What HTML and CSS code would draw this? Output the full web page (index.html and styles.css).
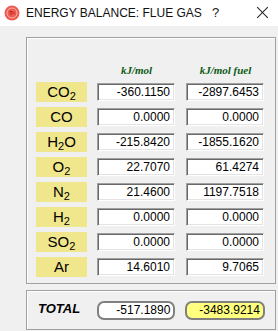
FILE: index.html
```html
<!doctype html>
<html lang="en">
  <head>
    <meta charset="UTF-8" />
    <title>Energy Balance: Flue Gas</title>
    <link rel="stylesheet" href="styles.css">
  </head>
  <body>
    <div class="titlebar">
      <svg class="app-icon" width="16" height="16" viewBox="0 0 16 16">
        <circle cx="8" cy="8" r="7.5" fill="#ef5a4f" />
        <circle cx="8" cy="8" r="5" fill="none" stroke="#f9b3ac" stroke-width="1" />
        <path d="M5.5 6.5h3M7 6.5v3.5M8.5 8h2.5" stroke="#b3261e" stroke-width="1" fill="none" />
      </svg>
      <span class="title">ENERGY BALANCE: FLUE GAS</span>
      <span class="help">?<i class="cross"></i></span>
    </div>

    <div class="panel gases">
      <div></div>
      <div class="unit">kJ/mol</div>
      <div class="unit">kJ/mol fuel</div>

      <div class="gas">CO<sub>2</sub></div>
      <div class="field">-360.1150</div>
      <div class="field">-2897.6453</div>

      <div class="gas">CO</div>
      <div class="field">0.0000</div>
      <div class="field">0.0000</div>

      <div class="gas">H<sub>2</sub>O</div>
      <div class="field">-215.8420</div>
      <div class="field">-1855.1620</div>

      <div class="gas">O<sub>2</sub></div>
      <div class="field">22.7070</div>
      <div class="field">61.4274</div>

      <div class="gas">N<sub>2</sub></div>
      <div class="field">21.4600</div>
      <div class="field">1197.7518</div>

      <div class="gas">H<sub>2</sub></div>
      <div class="field">0.0000</div>
      <div class="field">0.0000</div>

      <div class="gas">SO<sub>2</sub></div>
      <div class="field">0.0000</div>
      <div class="field">0.0000</div>

      <div class="gas">Ar</div>
      <div class="field">14.6010</div>
      <div class="field">9.7065</div>
    </div>

    <div class="panel totals">
      <div class="total-label">TOTAL</div>
      <div class="total">-517.1890</div>
      <div class="total highlight">-3483.9214</div>
    </div>
  </body>
</html>
```

FILE: styles.css
```css
body {
  margin: 0;
  background: #f0f0f0;
  font-family: "Liberation Sans", Arial, sans-serif;
  color: #000;
}
.titlebar {
  height: 26px;
  background: #fff;
  display: flex;
  align-items: center;
  padding-bottom: 1px;
  box-sizing: border-box;
}
.app-icon {
  margin-left: 4px;
  flex: none;
}
.title {
  width: 186px;
  flex: none;
  margin-left: 6px;
  font-size: 12px;
  color: #111;
  white-space: nowrap;
}
.help {
  display: flex;
  align-items: center;
  font-size: 13px;
  color: #222;
}
.cross {
  position: relative;
  width: 11px;
  height: 11px;
  margin-left: 38px;
}
.cross::before,
.cross::after {
  content: "";
  position: absolute;
  left: -2px;
  top: 5px;
  width: 15px;
  height: 1px;
  background: #222;
  transform: rotate(45deg);
}
.cross::after {
  transform: rotate(-45deg);
}
.panel {
  margin-left: 26px;
  width: 250px;
  box-sizing: border-box;
  border: 1px solid #a0a0a0;
  box-shadow: inset 1px 1px #fff;
}
.gases {
  margin-top: 11px;
  height: 247px;
  padding: 26px 0 0 9px;
  display: grid;
  grid-template-columns: 51px 79px 79px;
  grid-template-rows: 13px;
  grid-auto-rows: 20px;
  column-gap: 10px;
  row-gap: 5px;
}
.unit {
  font-family: "Liberation Serif", "Times New Roman", serif;
  font-style: italic;
  font-weight: bold;
  font-size: 11px;
  line-height: 13px;
  color: #0b5a14;
  text-align: center;
  margin-bottom: 5px;
}
.gas {
  background: #f0e68c;
  font-size: 15px;
  line-height: 20px;
  text-align: center;
}
.gas sub {
  font-size: 11px;
  line-height: 0;
  vertical-align: -3px;
}
.field {
  margin-top: 1px;
  height: 18px;
  width: 78px;
  box-sizing: border-box;
  background: #fff;
  border-top: 1px solid #a0a0a0;
  border-left: 1px solid #a0a0a0;
  border-right: 1px solid #fff;
  border-bottom: 1px solid #fff;
  box-shadow: inset 1px 1px #696969, inset -1px -1px #e3e3e3;
  font-size: 12px;
  line-height: 16px;
  text-align: right;
  padding-right: 4px;
}
.totals {
  margin-top: 6px;
  height: 40px;
  display: flex;
  align-items: center;
  padding-left: 11px;
}
.total-label {
  width: 59px;
  font-size: 13px;
  font-weight: bold;
  font-style: italic;
  margin-bottom: 4px;
}
.total {
  width: 79px;
  height: 19px;
  box-sizing: border-box;
  border: 2px solid #808080;
  border-radius: 7px;
  background: #fff;
  font-size: 12px;
  line-height: 15px;
  text-align: right;
  padding-right: 3px;
  margin-right: 10px;
  margin-top: 1px;
}
.highlight {
  width: 80px;
  background: #ffff80;
}
```
